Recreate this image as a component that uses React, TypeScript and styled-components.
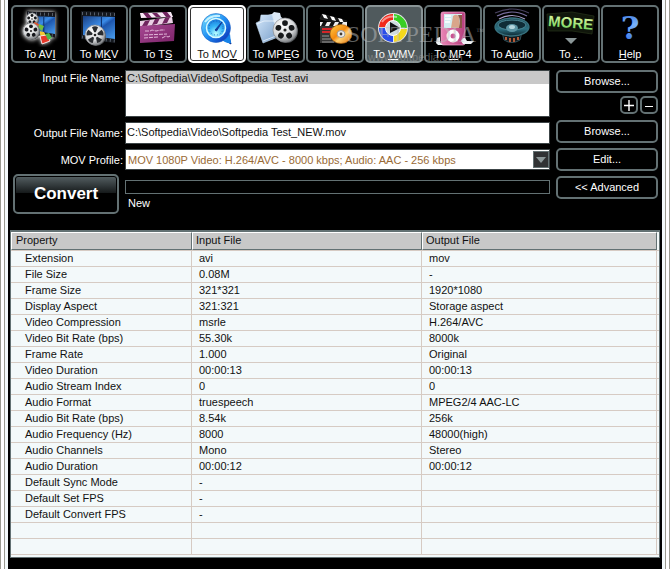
import React from 'react';
import styled, { createGlobalStyle, css } from 'styled-components';

const steel = '#637173';
const pale = '#f3f9fa';
const gridLine = '#d6cbc3';

const GlobalStyle = createGlobalStyle`
  * { box-sizing: border-box; }
  body {
    margin: 0;
    background: #000;
    font-family: "Liberation Sans", Arial, sans-serif;
    font-size: 11px;
  }
  button, input, select { font: inherit; margin: 0; }
`;

const OuterFrame = styled.div`
  display: flex;
  min-height: 100vh;
  padding: 0 3px;
  background: #fff;
  border: solid #9a9a90;
  border-width: 0 1px;
`;

const InnerFrame = styled.div`
  display: flex;
  flex: 1;
  min-width: 0;
  padding: 0 3px;
  background: ${pale};
  border: solid #9a9a90;
  border-width: 0 1px;
`;

const Window = styled.main`
  flex: 1;
  min-width: 0;
  padding: 5px 2px 11px;
  background: #000;
  color: #fff;
`;

const Toolbar = styled.nav`
  position: relative;
  display: grid;
  grid-template-columns: repeat(11, 1fr);
  gap: 1px;
  padding: 0 1px;
`;

const ToolButton = styled.button<{ $tone?: 'selected' | 'hover' }>`
  display: flex;
  flex-direction: column;
  align-items: center;
  height: 58px;
  padding: 0;
  border: 2px solid ${steel};
  border-radius: 5px;
  background: #000;
  color: #fff;
  line-height: 14px;
  white-space: nowrap;
  svg { display: block; flex: none; }
  ${p => p.$tone === 'selected' && css`
    background: #fff;
    color: #111;
    border-color: #fff;
    box-shadow: inset 0 0 0 1px #333;
  `}
  ${p => p.$tone === 'hover' && css`
    background: #505a5d;
    border-color: #899496;
  `}
`;

const Watermark = styled.div`
  position: absolute;
  top: 14px;
  right: 176px;
  display: flex;
  flex-direction: column;
  align-items: center;
  color: rgba(190, 190, 190, 0.5);
  font: 24px/31px "Liberation Serif", serif;
  pointer-events: none;
  sup { font-size: 8px; vertical-align: 8px; line-height: 8px; }
  small { font: 11px/14px "Liberation Sans", sans-serif; color: rgba(160, 160, 160, 0.5); }
`;

const Setup = styled.section`
  display: flex;
  gap: 6px;
  padding: 7px 2px 0 3px;
`;

const Fields = styled.div`
  flex: 1;
  min-width: 0;
  display: flex;
  flex-direction: column;
  gap: 5px;
`;

const FieldRow = styled.div`
  display: grid;
  grid-template-columns: 110px 1fr;
  gap: 2px;
`;

const Label = styled.label<{ $top?: boolean }>`
  align-self: ${p => (p.$top ? 'start' : 'center')};
  text-align: right;
  line-height: 16px;
  white-space: nowrap;
`;

const fieldBox = css`
  width: 100%;
  border: 1px solid #3c4446;
  border-radius: 0;
  background: #fff;
  color: #111;
  outline: none;
`;

const FileList = styled.select`
  ${fieldBox}
  height: 47px;
  padding: 0;
  overflow: hidden;
  option {
    min-height: 13px;
    padding: 1px 1px 0;
    line-height: 12px;
    color: #111;
  }
  option:checked { background: #c8c8c8 linear-gradient(#c8c8c8, #c8c8c8); color: #111; }
`;

const TextField = styled.input`
  ${fieldBox}
  height: 22px;
  padding: 0 1px 2px;
`;

const SelectWrap = styled.div`
  position: relative;
`;

const Profile = styled.select`
  ${fieldBox}
  display: block;
  appearance: none;
  height: 21px;
  padding: 0 18px 0 2px;
  color: #996a35;
`;

const DropArrow = styled.span`
  position: absolute;
  top: 2px;
  right: 1px;
  display: flex;
  align-items: center;
  justify-content: center;
  width: 16px;
  height: 17px;
  border: 1px solid ${steel};
  background: #303234;
  pointer-events: none;
`;

const RunRow = styled.div`
  display: flex;
  align-items: flex-start;
  gap: 6px;
  margin-top: -1px;
`;

const ConvertButton = styled.button`
  width: 106px;
  height: 40px;
  padding: 0;
  border: 2px solid ${steel};
  border-radius: 5px;
  background: linear-gradient(#566164, #15191a 17px, #000 17px);
  box-shadow: inset 0 0 0 1px #000;
  color: #fff;
  font-size: 17px;
  font-weight: bold;
`;

const Progress = styled.div`
  flex: 1;
  padding-top: 6px;
`;

const Bar = styled.div`
  height: 14px;
  border: 1px solid ${steel};
`;

const Status = styled.p`
  margin: 2px 3px;
  line-height: 14px;
`;

const Actions = styled.div`
  display: flex;
  flex-direction: column;
  gap: 5px;
  width: 102px;
`;

const ActionButton = styled.button`
  height: 23px;
  padding: 0 0 1px;
  border: 2px solid ${steel};
  border-radius: 5px;
  background: #000;
  color: #fff;
`;

const PairRow = styled.div`
  display: flex;
  justify-content: flex-end;
  align-items: flex-start;
  gap: 2px;
  height: 21px;
  margin: -2px 0 -2px;
`;

const SmallButton = styled(ActionButton)`
  display: flex;
  align-items: center;
  justify-content: center;
  width: 18px;
  height: 18px;
  padding: 0;
`;

const TablePanel = styled.section`
  margin-top: 16px;
  padding: 0 0 2px;
  border: 1px solid ${steel};
  border-top-width: 2px;
  background: ${pale};
`;

const Table = styled.table`
  width: 100%;
  table-layout: fixed;
  border-collapse: separate;
  border-spacing: 0;
  color: #111;
  text-align: left;
`;

const HeadCell = styled.th`
  height: 18px;
  padding: 0 3px 2px 4px;
  background: #c8c8c8;
  border: 1px solid;
  border-color: #fff ${steel} ${steel} #fff;
  font-weight: normal;
  line-height: 13px;
  & + & { padding-left: 3px; }
`;

const Cell = styled.td<{ $name?: boolean }>`
  height: 16px;
  padding: 1px 0 1px ${p => (p.$name ? 14 : 7)}px;
  border: solid ${gridLine};
  border-width: 0 1px 1px 0;
  line-height: 13px;
  white-space: nowrap;
`;

const Spacer = styled.td`
  height: 1px;
  padding: 0;
  border-bottom: 1px solid ${gridLine};
`;

const Edge = styled.td`
  padding: 0;
  border-bottom: 1px solid ${gridLine};
`;

const HiddenDefs = styled.svg`
  position: absolute;
`;

const Art = ({ children }: { children: React.ReactNode }) => (
  <svg width="54" height="40" viewBox="0 0 54 40" aria-hidden="true">{children}</svg>
);

const Defs = () => (
  <HiddenDefs width="0" height="0" aria-hidden="true">
    <defs>
      <linearGradient id="film" x1="0" y1="0" x2="1" y2="1">
        <stop offset="0" stopColor="#1a3e80" /><stop offset=".45" stopColor="#3b8ce8" />
        <stop offset=".55" stopColor="#1d55ac" /><stop offset="1" stopColor="#4aa0f0" />
      </linearGradient>
      <radialGradient id="metal" cx=".4" cy=".3" r=".8">
        <stop offset="0" stopColor="#fff" /><stop offset=".6" stopColor="#d4d6d8" /><stop offset="1" stopColor="#66696d" />
      </radialGradient>
      <filter id="halo" x="-30%" y="-30%" width="160%" height="160%">
        <feDropShadow dx="0" dy="0" stdDeviation="2" floodColor="#fff" floodOpacity="1" />
      </filter>
      <linearGradient id="plum" x1="0" y1="0" x2="1" y2="1"><stop offset="0" stopColor="#a84a94" /><stop offset="1" stopColor="#7b2268" /></linearGradient>
      <linearGradient id="ring" x1="0" y1="0" x2="1" y2="1"><stop offset="0" stopColor="#7de9ff" /><stop offset=".5" stopColor="#1e8df2" /><stop offset="1" stopColor="#0a22ae" /></linearGradient>
      <radialGradient id="dial" cx=".5" cy=".8" r=".8"><stop offset="0" stopColor="#baffff" /><stop offset=".5" stopColor="#35b5f7" /><stop offset="1" stopColor="#1572d8" /></radialGradient>
      <linearGradient id="folder" x1="0" y1="0" x2="1" y2="1"><stop offset="0" stopColor="#d5e8fb" /><stop offset="1" stopColor="#789ec9" /></linearGradient>
      <linearGradient id="disc" x1="0" y1="0" x2="1" y2="1"><stop offset="0" stopColor="#ffd24c" /><stop offset=".45" stopColor="#f48a10" /><stop offset=".6" stopColor="#ffd070" /><stop offset="1" stopColor="#e36a00" /></linearGradient>
      <linearGradient id="pink" x1="0" x2="1"><stop offset="0" stopColor="#e985b5" /><stop offset="1" stopColor="#b63f7d" /></linearGradient>
      <linearGradient id="teal" x1="0" y1="0" x2="0" y2="1"><stop offset="0" stopColor="#183844" /><stop offset=".6" stopColor="#2e7384" /><stop offset="1" stopColor="#0c2630" /></linearGradient>
      <linearGradient id="lime" x1="0" y1="0" x2="0" y2="1"><stop offset="0" stopColor="#f1ffb0" /><stop offset="1" stopColor="#66cf54" /></linearGradient>
      <linearGradient id="help" x1="0" y1="0" x2="0" y2="1"><stop offset="0" stopColor="#2a67d8" /><stop offset=".4" stopColor="#7ab2fa" /><stop offset="1" stopColor="#2766df" /></linearGradient>
    </defs>
  </HiddenDefs>
);

const Reel = ({ cx, cy, r, spokes }: { cx: number; cy: number; r: number; spokes?: boolean }) => (
  <g>
    <circle cx={cx + 1} cy={cy + 1} r={r} fill="#55585b" />
    <circle cx={cx} cy={cy} r={r} fill="url(#metal)" stroke="#8a8d90" strokeWidth=".7" />
    {[0, 72, 144, 216, 288].map(a => (
      <g key={a} transform={`rotate(${a} ${cx} ${cy})`}>
        {spokes
          ? <path d={`M${cx - 0.8} ${cy - r * 0.28}L${cx - r * 0.3} ${cy - r * 0.78}Q${cx} ${cy - r * 0.95} ${cx + r * 0.3} ${cy - r * 0.78}L${cx + 0.8} ${cy - r * 0.28}Z`} fill="#292c30" />
          : <circle cx={cx} cy={cy - r * 0.58} r={r * 0.24} fill="#17191b" />}
      </g>
    ))}
    <circle cx={cx} cy={cy} r={r * 0.13} fill="#222" />
  </g>
);

const FilmSheet = ({ x, w, h }: { x: number; w: number; h: number }) => (
  <g>
    <path d={`M${x} 4L${x + w} 5V${h + 1}L${x} ${h - 3}Z`} fill="#14181e" />
    <path d={`M${x + 2} 9L${x + w} 10V${h - 3}L${x + 2} ${h - 7}Z`} fill="url(#film)" />
    <path d={`M${x + 1} 6.5L${x + w} 7.5M${x + 1} ${h - 5}L${x + w} ${h - 1}`} stroke="#565e6a" strokeWidth="3" strokeDasharray="1 3" />
    <path d={`M${x + w * 0.6} 10V${h - 5}`} stroke="#0a2b66" strokeWidth="1" />
  </g>
);

const AviArt = () => (
  <Art>
    <g filter="url(#halo)">
      <FilmSheet x={14} w={28} h={30} />
      <Reel cx={19} cy={12} r={6} />
      <path d="M21 15l5 2-1 5-5-2z" fill="#e2502a" />
      <path d="M26 17l5 2-2 5-4-2z" fill="#72bf3c" />
      <path d="M22 20l5 2 2 4-5 2z" fill="#2b6ede" />
      <path d="M26 24l5 1 2 4-5 1z" fill="#f0c832" />
      <path d="M27 29l7-1 3 6-8 3z" fill="#e5392b" stroke="#fff" strokeWidth=".8" />
      <path d="M32 27l4-1 3 5-4 2z" fill="#50b84a" />
      <Reel cx={18} cy={24} r={8} />
    </g>
  </Art>
);

const MkvArt = () => (
  <Art><FilmSheet x={9} w={34} h={35} /><Reel cx={23} cy={28} r={10} spokes /></Art>
);

const TsArt = () => (
  <Art>
    <path d="M9 6L40 5L42 10L10 11Z" fill="#f7e8f4" />
    <path d="M12 6l5 0 4 5-5 0zM21 6l5 0 4 4-5 0zM31 5l5 0 4 5-5 0z" fill="#70255f" />
    <path d="M9 14L41 10L42 16L9 20Z" fill="#ead0e5" />
    <path d="M14 14l5-1-3 6-5 0zM24 12l5-1-3 6-5 1zM34 11l5-1-3 6-5 1z" fill="#70255f" />
    <path d="M9 19L44 17L43 34L9 36Z" fill="url(#plum)" />
    <path d="M14 24h5l2-1 4 1 5-1 4 0M13 28l23-1M13 31l14-1M31 31l4-2 2 1 2-1" fill="none" stroke="#ebc6e3" strokeWidth=".9" strokeDasharray="4 1" />
  </Art>
);

const MovArt = () => (
  <Art>
    <path d="M29 30L41 37L38 26Z" fill="#0b35b4" stroke="#083090" />
    <path d="M30 31q5 6 11 5l-1-9z" fill="#1682e8" />
    <circle cx="26" cy="21" r="14.5" fill="url(#ring)" stroke="#1b64c8" strokeWidth=".6" />
    <circle cx="26" cy="21" r="9.5" fill="url(#dial)" stroke="#d9fbff" strokeWidth="1.5" />
    <circle cx="26" cy="21" r="7" fill="none" stroke="#1d58ae" strokeWidth=".8" strokeDasharray="1 2" />
    <path d="M25 23L32 15L26.5 24Z" fill="#123c9b" stroke="#123c9b" />
    <path d="M15 15Q20 8 30 9" fill="none" stroke="#e4feff" strokeWidth="2" opacity=".8" />
  </Art>
);

const MpegArt = () => (
  <Art>
    <path d="M19 8l4-1 2-2 6 1 1 4 6 4-14 18-8 2z" fill="#dce9f6" />
    <path d="M7 16l4-2 1-6 11 0 6 22-15 6z" fill="url(#folder)" stroke="#c4dcf2" strokeWidth=".6" />
    <path d="M8 17l7-3 12 0M14 34l13-5" fill="none" stroke="#f3faff" opacity=".7" />
    <Reel cx={36} cy={23} r={12} />
  </Art>
);

const VobArt = () => (
  <Art>
    <path d="M12 12L14 7L39 14L38 18Z" fill="#151515" stroke="#333" strokeWidth=".5" />
    <path d="M14 7l4 1 2 4-4-1zM22 9l4 1 2 4-4-1zM30 11l4 1 2 4-4-1z" fill="#fff" />
    <path d="M12 15H39V36H12Z" fill="#343434" />
    <path d="M12 15H39V19H12Z" fill="#eee" />
    <path d="M15 15h4l-2 4h-4zM23 15h4l-2 4h-4zM31 15h4l-2 4h-4z" fill="#111" />
    <path d="M14 22h11M14 25h8" stroke="#d42529" strokeWidth="2" />
    <path d="M14 29h7M14 32h9M14 35h12" stroke="#999" />
    <ellipse cx="33" cy="27" rx="11" ry="9.5" fill="url(#disc)" stroke="#a55a08" strokeWidth=".6" />
    <ellipse cx="33" cy="27" rx="4" ry="3.5" fill="#ececec" stroke="#9c9c9c" />
    <circle cx="33" cy="27" r="1.4" fill="#443c30" />
  </Art>
);

const WmvArt = () => (
  <Art>
    <circle cx="26" cy="21" r="15" fill="#e8e8e8" />
    <path d="M12 20A14 14 0 0 1 26 7V14A7 7 0 0 0 19 20Z" fill="#f0291b" />
    <path d="M27 7A14 14 0 0 1 40 21L33 21A7 7 0 0 0 27 14Z" fill="#39ce24" />
    <path d="M40 22A14 14 0 0 1 27 35V28A7 7 0 0 0 33 22Z" fill="#f5d91b" />
    <path d="M26 35A14 14 0 0 1 12 21H19A7 7 0 0 0 26 28Z" fill="#2a4ee8" />
    <circle cx="26" cy="21" r="7.5" fill="#cfdbe0" stroke="#fff" />
    <path d="M23 15L33 21L23 26Z" fill="#101114" />
    <path d="M15 15Q20 8 30 10" fill="none" stroke="#fff" strokeWidth="2" opacity=".5" />
  </Art>
);

const Mp4Art = () => (
  <Art>
    <rect x="15" y="5" width="24" height="33" rx="2" fill="url(#pink)" stroke="#f4a7cf" strokeWidth=".7" />
    <rect x="18" y="7" width="18" height="14" fill="#d4edf1" />
    <path d="M25 21l2-12q4-3 6 1l1 11z" fill="#d9a58a" />
    <path d="M32 8h4v13h-3q2-8-1-13z" fill="#8b5746" />
    <path d="M19 9h6M19 12h6M19 15h5" stroke="#fff" strokeWidth="1.5" />
    <circle cx="27" cy="29" r="6.5" fill="#fff" />
    <circle cx="27" cy="29" r="2.5" fill="#c95391" />
    <path d="M11 31l3-1 0 5 3 3-5 0-2-2zM35 34q2-4 4-3l2 3 7 0-3 3-8 0z" fill="#edf1f4" />
  </Art>
);

const AudioArt = () => (
  <Art>
    <g fill="none" stroke="#766c9d" strokeWidth="1.2">
      <path d="M10 6Q27-2 44 6" opacity=".6" /><path d="M12 9Q27 1 42 9" /><path d="M14 12Q27 5 40 12" stroke="#aaa1c9" />
    </g>
    <path d="M17 25L19 33Q27 38 35 33L37 25Z" fill="#151a1d" stroke="#304f58" />
    <path d="M21 30v3M25 31v4M29 31v4M33 30v3" stroke="#b15a38" strokeWidth="2" />
    <ellipse cx="27" cy="20" rx="17" ry="9" fill="url(#teal)" stroke="#37717e" strokeWidth="1.3" />
    <ellipse cx="27" cy="18" rx="14" ry="5" fill="#102d37" stroke="#4b8997" />
    <ellipse cx="27" cy="21" rx="6" ry="4" fill="#5d96a5" />
    <ellipse cx="27" cy="20" rx="3" ry="2" fill="#b5d6dd" />
  </Art>
);

const MoreArt = () => (
  <Art>
    <path d="M3 7L28 5L50 9L48 27L28 24L4 24Z" fill="#10160b" stroke="#26331a" strokeWidth=".7" />
    <text x="4" y="21" transform="rotate(5 27 18)" fontFamily="Liberation Sans, Arial, sans-serif" fontWeight="bold" fontSize="15" fill="url(#lime)">MORE</text>
    <path d="M21 31H33L27 37Z" fill="#8b9798" />
  </Art>
);

const HelpArt = () => (
  <Art>
    <text x="27" y="32" textAnchor="middle" fontFamily="DejaVu Serif, serif" fontWeight="bold" fontSize="32" fill="url(#help)">?</text>
  </Art>
);

type Tool = { before: string; key: string; after?: string; art: () => React.JSX.Element; tone?: 'selected' | 'hover' };

const tools: Tool[] = [
  { before: 'To AV', key: 'I', art: AviArt },
  { before: 'To M', key: 'K', after: 'V', art: MkvArt },
  { before: 'To T', key: 'S', art: TsArt },
  { before: 'To MO', key: 'V', art: MovArt, tone: 'selected' },
  { before: 'To MP', key: 'E', after: 'G', art: MpegArt },
  { before: 'To VO', key: 'B', art: VobArt },
  { before: 'To ', key: 'W', after: 'MV', art: WmvArt, tone: 'hover' },
  { before: 'To ', key: 'M', after: 'P4', art: Mp4Art },
  { before: 'To A', key: 'u', after: 'dio', art: AudioArt },
  { before: 'To ', key: '.', after: '..', art: MoreArt },
  { before: '', key: 'H', after: 'elp', art: HelpArt },
];

const properties: [string, string, string][] = [
  ['Extension', 'avi', 'mov'],
  ['File Size', '0.08M', '-'],
  ['Frame Size', '321*321', '1920*1080'],
  ['Display Aspect', '321:321', 'Storage aspect'],
  ['Video Compression', 'msrle', 'H.264/AVC'],
  ['Video Bit Rate (bps)', '55.30k', '8000k'],
  ['Frame Rate', '1.000', 'Original'],
  ['Video Duration', '00:00:13', '00:00:13'],
  ['Audio Stream Index', '0', '0'],
  ['Audio Format', 'truespeech', 'MPEG2/4 AAC-LC'],
  ['Audio Bit Rate (bps)', '8.54k', '256k'],
  ['Audio Frequency (Hz)', '8000', '48000(high)'],
  ['Audio Channels', 'Mono', 'Stereo'],
  ['Audio Duration', '00:00:12', '00:00:12'],
  ['Default Sync Mode', '-', ''],
  ['Default Set FPS', '-', ''],
  ['Default Convert FPS', '-', ''],
  ['', '', ''],
  ['', '', ''],
];

export default function App() {
  return (
    <OuterFrame>
      <GlobalStyle />
      <Defs />
      <InnerFrame>
        <Window>
          <Toolbar aria-label="Output format">
            {tools.map(({ before, key, after, art: Picture, tone }) => (
              <ToolButton key={before + key} type="button" $tone={tone}>
                <Picture />
                <span>{before}<u>{key}</u>{after}</span>
              </ToolButton>
            ))}
            <Watermark><span>SOFTPEDIA<sup>™</sup></span><small>www.softpedia.com</small></Watermark>
          </Toolbar>

          <Setup>
            <Fields>
              <FieldRow>
                <Label $top htmlFor="input-files">Input File Name:</Label>
                <FileList id="input-files" size={3} defaultValue="avi">
                  <option value="avi">C:\Softpedia\Video\Softpedia Test.avi</option>
                </FileList>
              </FieldRow>
              <FieldRow>
                <Label htmlFor="output-file">Output File Name:</Label>
                <TextField id="output-file" defaultValue="C:\Softpedia\Video\Softpedia Test_NEW.mov" />
              </FieldRow>
              <FieldRow>
                <Label htmlFor="profile">MOV Profile:</Label>
                <SelectWrap>
                  <Profile id="profile">
                    <option>MOV 1080P Video: H.264/AVC - 8000 kbps; Audio: AAC - 256 kbps</option>
                  </Profile>
                  <DropArrow>
                    <svg width="10" height="6" viewBox="0 0 10 6"><path d="M0 0H10L5 6Z" fill="#8b9798" /></svg>
                  </DropArrow>
                </SelectWrap>
              </FieldRow>
              <RunRow>
                <ConvertButton type="button">Convert</ConvertButton>
                <Progress>
                  <Bar role="progressbar" aria-label="Conversion" aria-valuenow={0} />
                  <Status>New</Status>
                </Progress>
              </RunRow>
            </Fields>
            <Actions>
              <ActionButton type="button">Browse...</ActionButton>
              <PairRow>
                <SmallButton type="button" aria-label="Add file">
                  <svg width="12" height="12" viewBox="0 0 12 12"><path d="M1 6.5H11M6 1V12" stroke="#fff" strokeWidth="1.4" /></svg>
                </SmallButton>
                <SmallButton type="button" aria-label="Remove file">
                  <svg width="12" height="12" viewBox="0 0 12 12"><path d="M2 7.5H10" stroke="#fff" /></svg>
                </SmallButton>
              </PairRow>
              <ActionButton type="button">Browse...</ActionButton>
              <ActionButton type="button">Edit...</ActionButton>
              <ActionButton type="button">&lt;&lt; Advanced</ActionButton>
            </Actions>
          </Setup>

          <TablePanel>
            <Table>
              <colgroup>
                <col width="181" /><col width="230" /><col /><col width="2" />
              </colgroup>
              <thead>
                <tr>
                  <HeadCell scope="col">Property</HeadCell>
                  <HeadCell scope="col">Input File</HeadCell>
                  <HeadCell scope="col">Output File</HeadCell>
                </tr>
              </thead>
              <tbody>
                <tr><Spacer colSpan={4} /></tr>
                {properties.map(([name, input, output], i) => (
                  <tr key={i}>
                    <Cell $name>{name}</Cell>
                    <Cell>{input}</Cell>
                    <Cell>{output}</Cell>
                    <Edge />
                  </tr>
                ))}
              </tbody>
            </Table>
          </TablePanel>
        </Window>
      </InnerFrame>
    </OuterFrame>
  );
}
